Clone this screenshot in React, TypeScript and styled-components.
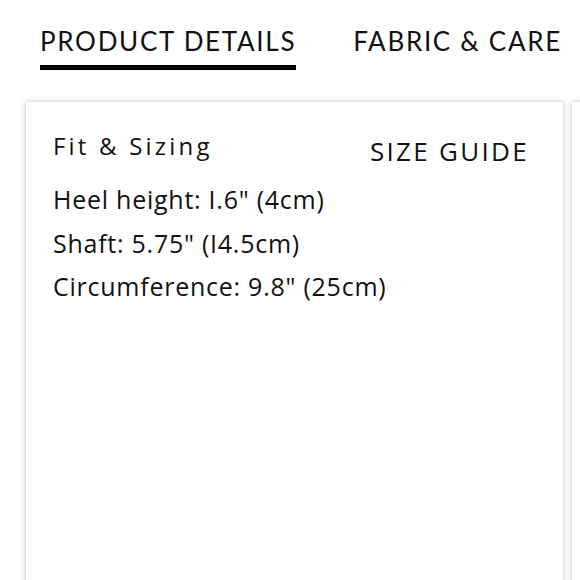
import React from "react";
import styled, { createGlobalStyle } from "styled-components";

const Global = createGlobalStyle`
  html, body { margin: 0; padding: 0; background: #fff; }
  body { font-family: "Open Sans", "Noto Sans", sans-serif; color: #111; overflow: hidden; }
`;

const Page = styled.div`
  width: 580px;
  height: 580px;
  overflow: hidden;
  display: flex;
  flex-direction: column;
`;

const Tabs = styled.nav`
  display: flex;
  gap: 57px;
  padding: 25px 0 0 40px;
`;

const Tab = styled.div<{ $active?: boolean }>`
  font-family: "Lato", sans-serif;
  font-size: 26px;
  letter-spacing: 1.7px;
  line-height: 32px;
  padding-bottom: 8px;
  white-space: nowrap;
  border-bottom: 5px solid ${(p) => (p.$active ? "#000" : "transparent")};
`;

const Track = styled.div`
  display: flex;
  gap: 9px;
  padding: 32px 0 0 26px;
  flex: 1;
`;

const Card = styled.section`
  flex: 0 0 537px;
  height: 520px;
  background: #fff;
  box-shadow: 0 0 5px rgba(0, 0, 0, 0.28);
  padding: 29px 34px 0 27px;
  box-sizing: border-box;
`;

const Header = styled.div`
  display: flex;
  justify-content: space-between;
  align-items: flex-start;
`;

const Title = styled.h3`
  margin: 0;
  font-weight: 400;
  font-size: 24px;
  letter-spacing: 3.2px;
  line-height: 30px;
`;

const Guide = styled.a`
  font-size: 26px;
  letter-spacing: 2.3px;
  line-height: 30px;
  margin-top: 5px;
  color: #111;
`;

const List = styled.div`
  display: flex;
  flex-direction: column;
  margin-top: 12px;
`;

const Line = styled.p`
  margin: 0;
  font-size: 25px;
  letter-spacing: 0.75px;
  line-height: 43.5px;
`;

export default function App() {
  return (
    <Page>
      <Global />
      <Tabs>
        <Tab $active>PRODUCT DETAILS</Tab>
        <Tab>FABRIC &amp; CARE</Tab>
      </Tabs>
      <Track>
        <Card>
          <Header>
            <Title>Fit &amp; Sizing</Title>
            <Guide>SIZE GUIDE</Guide>
          </Header>
          <List>
            <Line>Heel height: I.6" (4cm)</Line>
            <Line>Shaft: 5.75" (I4.5cm)</Line>
            <Line>Circumference: 9.8" (25cm)</Line>
          </List>
        </Card>
        <Card />
      </Track>
    </Page>
  );
}
